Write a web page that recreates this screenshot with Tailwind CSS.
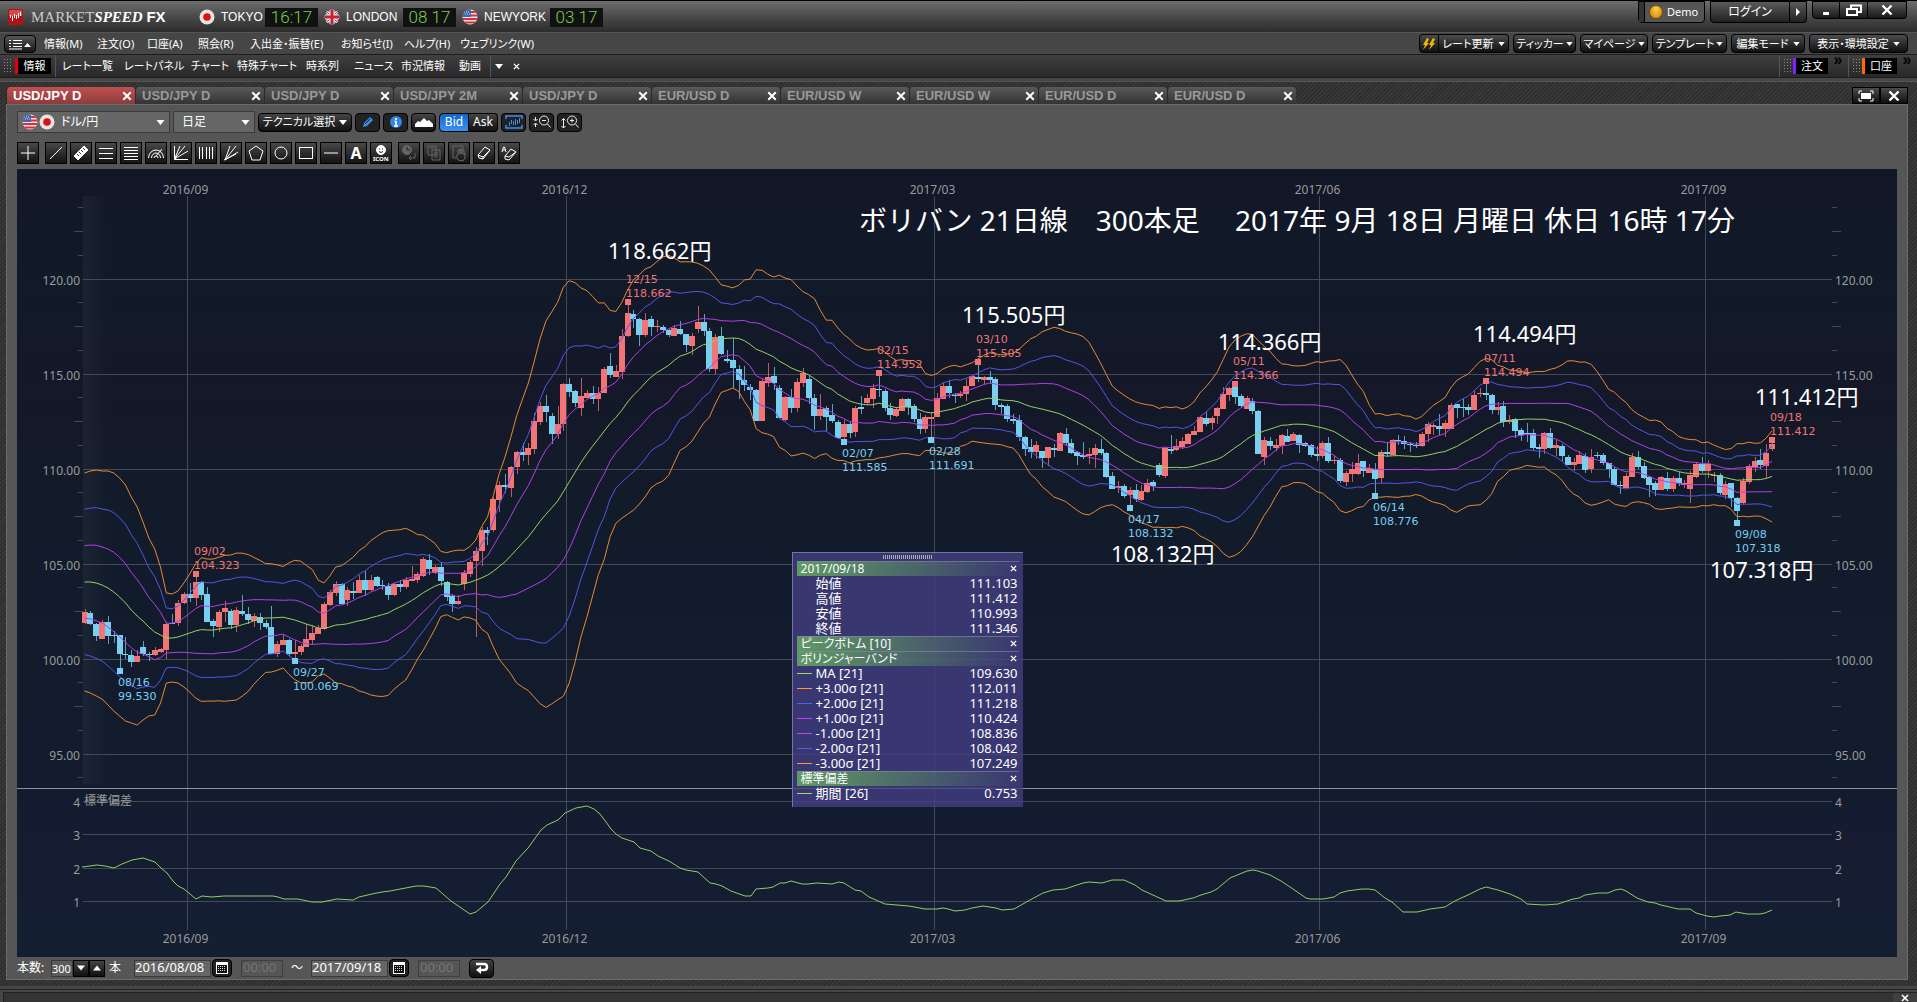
<!DOCTYPE html>
<html lang="ja">
<head>
  <meta charset="UTF-8">
  <meta name="viewport" content="width=device-width, initial-scale=1.0">
  <title>MARKETSPEED FX</title>
  <script src="https://cdn.jsdelivr.net/npm/@tailwindcss/browser@4"></script>
</head>
<body class="min-h-screen flex flex-col overflow-x-hidden bg-[#464646] font-['Noto_Sans','Noto_Sans_CJK_JP',sans-serif] text-xs leading-4 text-white">

  <!-- Shared icons -->
  <svg class="absolute size-0" aria-hidden="true">
    <defs>
      <clipPath id="round"><circle cx="8" cy="8" r="7.5"/></clipPath>
      <symbol id="jp" viewBox="0 0 16 16">
        <circle cx="8" cy="8" r="7.5" fill="#e4e4e4"/>
        <circle cx="8" cy="8" r="3.8" fill="#dd1111"/>
      </symbol>
      <symbol id="uk" viewBox="0 0 16 16">
        <g clip-path="url(#round)">
          <rect width="16" height="16" fill="#28408c"/>
          <path d="M0 0L16 16M16 0L0 16" stroke="#eee" stroke-width="3"/>
          <path d="M0 0L16 16M16 0L0 16" stroke="#c33" stroke-width="1"/>
          <path d="M8 0V16M0 8H16" stroke="#eee" stroke-width="5"/>
          <path d="M8 0V16M0 8H16" stroke="#c8202c" stroke-width="3"/>
        </g>
      </symbol>
      <symbol id="us" viewBox="0 0 16 16">
        <g clip-path="url(#round)">
          <rect width="16" height="16" fill="#f0e4e4"/>
          <path d="M0 3H16M0 6.500H16M0 10H16M0 13.500H16" stroke="#d8303a" stroke-width="1.800"/>
          <rect width="9" height="8" fill="#3868b0"/>
          <path d="M2 3h6M3 5h5" stroke="#cde" stroke-width="1" stroke-dasharray="1 1"/>
        </g>
      </symbol>
      <symbol id="down" viewBox="0 0 8 5"><path d="M0 0h8L4 5z" fill="#fff"/></symbol>
      <symbol id="cross" viewBox="0 0 8 8"><path d="M1 1L7 7M7 1L1 7" stroke="#fff" stroke-width="1.600"/></symbol>
      <symbol id="cal" viewBox="0 0 14 14">
        <rect x="1" y="1" width="12" height="12" fill="#fff"/>
        <rect x="2" y="4" width="10" height="8" fill="#111"/>
        <path d="M3 5.500h8M3 7.500h8M3 9.500h8" stroke="#ddd" stroke-width="1" stroke-dasharray="1 1"/>
      </symbol>
    </defs>
  </svg>

  <!-- Title bar -->
  <header class="flex h-8 items-start bg-linear-to-b from-[#6e6e6e] via-[#4a4a4a] to-[#2c2c2c] border-t border-black">
    <div class="flex h-8 items-center pl-2">
      <svg class="h-4 w-[15px]" viewBox="0 0 15 16">
        <rect width="15" height="16" rx="1" fill="#b01218"/>
        <rect x="1" y="1" width="13" height="6" fill="#d04a48"/>
        <path d="M2.500 6v3M4.500 7v5M6.500 5v4M8.500 6v4M10.500 4v5M12.500 3v4" stroke="#fff" stroke-width="1"/>
      </svg>
      <div class="ml-2 w-[144px] whitespace-nowrap text-[15px] text-[#ccc] font-['Liberation_Serif',serif]">MARKET<i class="font-bold text-white">SPEED</i> <b class="font-['Liberation_Sans',sans-serif] text-[15px] text-white">FX</b></div>
      <svg class="ml-6 size-4"><use href="#jp"/></svg>
      <span class="ml-1.5 w-[44px] text-[12px] font-['Liberation_Sans',sans-serif]">TOKYO</span>
      <span class="h-[19px] w-[53px] bg-[#111] text-center text-[17px] leading-[19px] font-light text-[#7ad04a] font-['Roboto',sans-serif]">16:17</span>
      <svg class="ml-1.5 size-4"><use href="#uk"/></svg>
      <span class="ml-1.5 w-[57px] text-[12px] font-['Liberation_Sans',sans-serif]">LONDON</span>
      <span class="h-[19px] w-[53px] bg-[#111] text-center text-[17px] leading-[19px] font-light text-[#7ad04a] font-['Roboto',sans-serif]">08 17</span>
      <svg class="ml-1.5 size-4"><use href="#us"/></svg>
      <span class="ml-1.5 w-[66px] text-[12px] font-['Liberation_Sans',sans-serif]">NEWYORK</span>
      <span class="h-[19px] w-[53px] bg-[#111] text-center text-[17px] leading-[19px] font-light text-[#7ad04a] font-['Roboto',sans-serif]">03 17</span>
    </div>
    <div class="ml-auto flex items-start pr-[10px]">
      <div class="flex h-[22px] w-[67px] items-center rounded-b-sm border border-black bg-[#555]">
        <span class="h-full w-1.5 border-r border-black bg-[#333]"></span>
        <span class="ml-1 size-3.5 rounded-full border border-[#7a4d00] bg-radial-[at_50%_25%] from-[#ffd24a] to-[#c97800]"></span>
        <span class="ml-1 text-[11px]">Demo</span>
      </div>
      <button class="ml-[5px] h-[22px] w-20 rounded-bl-sm border border-black bg-linear-to-b from-[#5a5a5a] to-[#222] [font-feature-settings:'palt']">ログイン</button>
      <button class="flex h-[22px] w-[17px] items-center justify-center rounded-br-sm border border-l-0 border-black bg-linear-to-b from-[#5a5a5a] to-[#222]" aria-label="その他"><svg class="h-2 w-1.5" viewBox="0 0 6 8"><path d="M1 0l4 4-4 4z" fill="#fff"/></svg></button>
      <button class="ml-[5px] flex h-[18px] w-[28px] items-center justify-center rounded-bl-sm border border-black bg-linear-to-b from-[#5a5a5a] to-[#1a1a1a]" aria-label="最小化"><svg class="size-3" viewBox="0 0 12 12"><path d="M3 9.500h6" stroke="#fff" stroke-width="3"/></svg></button>
      <button class="flex h-[18px] w-[28px] items-center justify-center border border-l-0 border-black bg-linear-to-b from-[#5a5a5a] to-[#1a1a1a]" aria-label="元に戻す"><svg class="h-3 w-4" viewBox="0 0 16 12"><path d="M5 5V1.500h10V8H11M1 5h10v6H1z" fill="none" stroke="#fff" stroke-width="2"/></svg></button>
      <button class="flex h-[18px] w-[39px] items-center justify-center rounded-br-sm border border-l-0 border-black bg-linear-to-b from-[#5a5a5a] to-[#1a1a1a]" aria-label="閉じる"><svg class="size-3"><use href="#cross"/></svg></button>
    </div>
  </header>

  <!-- Menu bar -->
  <nav class="flex h-[22px] items-center border-t border-[#555] pl-1 pr-[9px] text-[11px] [font-feature-settings:'palt'] whitespace-nowrap">
    <button class="mr-2 flex h-[18px] w-8 items-center justify-center gap-1 rounded-sm border border-black bg-linear-to-b from-[#555] to-[#181818]" aria-label="メニュー">
      <svg class="h-3 w-[22px]" viewBox="0 0 22 12"><path d="M0 2.500h2M4 2.500h9M0 5.500h2M4 5.500h9M0 8.500h2M4 8.500h9M0 11h13" stroke="#fff"/><path d="M15 9h7l-3.500-4z" fill="#fff"/></svg>
    </button>
    <button class="w-[53px] text-left">情報(M)</button>
    <button class="w-[50px] text-left">注文(O)</button>
    <button class="w-[51px] text-left">口座(A)</button>
    <button class="w-[52px] text-left">照会(R)</button>
    <button class="w-[91px] text-left">入出金・振替(E)</button>
    <button class="w-[63px] text-left">お知らせ(I)</button>
    <button class="w-[56px] text-left">ヘルプ(H)</button>
    <button class="w-[70px] text-left">ウェブリンク(W)</button>
    <div class="ml-auto flex gap-1">
      <div class="flex">
        <button class="flex h-[19px] w-5 items-center justify-center rounded-l-sm border border-black bg-linear-to-b from-[#4c4c4c] to-[#111]" aria-label="更新"><svg class="size-3.5" viewBox="0 0 14 14"><path d="M5 1L1 8h2L1 13l6-7H5l2-4zM11 1L7 8h2L7 13l6-7h-2l2-4z" fill="#f5b800"/></svg></button>
        <button class="flex h-[19px] w-[70px] items-center justify-center gap-1 rounded-r-sm border border-l-0 border-black bg-linear-to-b from-[#4c4c4c] to-[#111]">レート更新<svg class="h-1 w-[7px]"><use href="#down"/></svg></button>
      </div>
      <button class="flex h-[19px] w-[63px] items-center justify-center gap-0.5 rounded-sm border border-black bg-linear-to-b from-[#4c4c4c] to-[#111]">ティッカー<svg class="h-1 w-[7px]"><use href="#down"/></svg></button>
      <button class="flex h-[19px] w-[68px] items-center justify-center gap-0.5 rounded-sm border border-black bg-linear-to-b from-[#4c4c4c] to-[#111]">マイページ<svg class="h-1 w-[7px]"><use href="#down"/></svg></button>
      <button class="flex h-[19px] w-[75px] items-center justify-center gap-0.5 rounded-sm border border-black bg-linear-to-b from-[#4c4c4c] to-[#111]">テンプレート<svg class="h-1 w-[7px]"><use href="#down"/></svg></button>
      <button class="flex h-[19px] w-[74px] items-center justify-center gap-1 rounded-sm border border-black bg-linear-to-b from-[#4c4c4c] to-[#111]">編集モード<svg class="h-1 w-[7px]"><use href="#down"/></svg></button>
      <button class="flex h-[19px] w-[99px] items-center justify-center gap-1 rounded-sm border border-black bg-linear-to-b from-[#4c4c4c] to-[#111]">表示・環境設定<svg class="h-1 w-[7px]"><use href="#down"/></svg></button>
    </div>
  </nav>

  <!-- Function bar -->
  <nav class="flex h-6 items-center border-y border-[#1c1c1c] bg-linear-to-b from-[#404040] to-[#282828] pl-[3px] text-[11px] [font-feature-settings:'palt'] whitespace-nowrap">
    <span class="h-4 w-2 bg-[radial-gradient(#888_25%,transparent_30%)] bg-size-[3px_3px]"></span>
    <button class="ml-1 h-4 w-9 border-l-3 border-red-600 bg-black">情報</button>
    <span class="ml-1 mr-0.5 h-full border-l border-[#555]"></span>
    <button class="ml-1 w-[62px] text-left">レート一覧</button>
    <button class="w-[67px] text-left">レートパネル</button>
    <button class="w-[46px] text-left">チャート</button>
    <button class="w-[69px] text-left">特殊チャート</button>
    <button class="w-12 text-left">時系列</button>
    <button class="w-[47px] text-left">ニュース</button>
    <button class="w-[58px] text-left">市況情報</button>
    <button class="w-[31px] text-left">動画</button>
    <span class="h-full border-l border-[#555]"></span>
    <button class="ml-1" aria-label="一覧"><svg class="h-[5px] w-2"><use href="#down"/></svg></button>
    <button class="ml-2.5" aria-label="閉じる"><svg class="size-[7px]"><use href="#cross"/></svg></button>
    <div class="ml-auto flex h-full items-center">
      <span class="h-full w-1 border-l border-[#555]"></span>
      <span class="h-4 w-2 bg-[radial-gradient(#888_25%,transparent_30%)] bg-size-[3px_3px]"></span>
      <button class="ml-0.5 h-4 w-[35px] border-l-3 border-violet-600 bg-black">注文</button>
      <span class="mb-3 w-5 text-center text-base font-bold text-black font-['Liberation_Sans',sans-serif]">»</span>
      <span class="h-full w-1 border-l border-[#555]"></span>
      <span class="h-4 w-2 bg-[radial-gradient(#888_25%,transparent_30%)] bg-size-[3px_3px]"></span>
      <button class="ml-0.5 h-4 w-[35px] border-l-3 border-orange-500 bg-black">口座</button>
      <span class="mb-3 w-5 text-center text-base font-bold text-black font-['Liberation_Sans',sans-serif]">»</span>
    </div>
  </nav>

  <!-- Chart window -->
  <main class="mt-[3px] border-t border-[#555] bg-[repeating-linear-gradient(135deg,#2d2d2d_0px,#2d2d2d_1px,#3a3a3a_2px,#3a3a3a_3px)] pt-1 pb-[6px] pl-1.5 pr-[9px]">
    <div class="flex h-[18px] items-end justify-between">
      <div id="tabs" class="flex"></div>
      <div class="flex">
        <button class="flex h-[17px] w-7 items-center justify-center border border-black bg-linear-to-b from-[#4c4c4c] to-[#111]" aria-label="最大化"><svg class="h-3 w-4" viewBox="0 0 16 12"><rect x="3" y="3" width="10" height="6" fill="#fff"/><path d="M1 4V1h3M12 1h3v3M15 8v3h-3M4 11H1V8" fill="none" stroke="#fff"/></svg></button>
        <button class="flex h-[17px] w-7 items-center justify-center border border-black bg-linear-to-b from-[#4c4c4c] to-[#111]" aria-label="閉じる"><svg class="size-3"><use href="#cross"/></svg></button>
      </div>
    </div>

    <div class="border border-[#6c6c6c] bg-[#565656] px-2.5">
      <div class="flex items-center gap-[3px] pt-1.5 [font-feature-settings:'palt']">
        <label class="flex h-[22px] w-[153px] items-center border border-[#3a3a3a] bg-[#666] pl-1 pr-1">
          <svg class="size-4"><use href="#us"/></svg><svg class="ml-px size-4"><use href="#jp"/></svg>
          <select class="ml-1.5 flex-1 appearance-none outline-none" aria-label="通貨ペア"><option>ドル/円</option></select>
          <svg class="h-[5px] w-[9px]"><use href="#down"/></svg>
        </label>
        <label class="flex h-[22px] w-[82px] items-center border border-[#3a3a3a] bg-[#666] pl-2 pr-1">
          <select class="flex-1 appearance-none outline-none" aria-label="足種"><option>日足</option></select>
          <svg class="h-[5px] w-[9px]"><use href="#down"/></svg>
        </label>
        <button class="flex h-[19px] w-[94px] items-center justify-center gap-1 whitespace-nowrap rounded-sm border border-black bg-linear-to-b from-[#444] to-[#111] text-[11px]">テクニカル選択<svg class="h-[5px] w-2"><use href="#down"/></svg></button>
        <button class="flex h-[19px] w-[25px] items-center justify-center rounded-sm border border-black bg-[#222]" aria-label="描画"><svg class="size-3.5" viewBox="0 0 14 14"><path d="M2 12l1-4 6-6 3 3-6 6z" fill="#3b8ee8"/><path d="M4 9l5-5" stroke="#124" /></svg></button>
        <button class="flex h-[19px] w-[25px] items-center justify-center rounded-sm border border-black bg-[#222]" aria-label="情報"><svg class="size-3.5" viewBox="0 0 14 14"><circle cx="7" cy="7" r="6" fill="#2f86e6"/><path d="M7 3v2M5.500 6.500H7V11M5 11h4" stroke="#fff" stroke-width="1.600" fill="none"/></svg></button>
        <button class="flex h-[19px] w-[25px] items-center justify-center rounded-sm border border-black bg-linear-to-b from-[#444] to-[#111]" aria-label="エリア"><svg class="h-3 w-[18px]" viewBox="0 0 18 12"><path d="M0 11V8l3-3 2 1 4-4 3 3 2-1 4 4v3z" fill="#fff"/></svg></button>
        <div class="flex">
          <button class="h-[19px] w-[30px] rounded-l-sm border border-black bg-linear-to-b from-[#0f66c8] to-[#3a92f0]">Bid</button>
          <button class="h-[19px] w-[29px] rounded-r-sm border border-l-0 border-black bg-linear-to-b from-[#444] to-[#111]">Ask</button>
        </div>
        <button class="flex h-[19px] w-[25px] items-center justify-center rounded-sm border border-black bg-[#222]" aria-label="足幅"><svg class="h-3.5 w-[18px]" viewBox="0 0 18 14"><path d="M1 4V1h16v3M1 10v3h16v-3" fill="none" stroke="#3b8ee8" stroke-width="1.500"/><path d="M4.500 7v4M6.500 5v4M8.500 6v4M10.500 4v6M12.500 5v4M14.500 3v5" stroke="#3b8ee8"/></svg></button>
        <button class="flex h-[19px] w-[25px] items-center justify-center rounded-sm border border-black bg-[#222]" aria-label="縮小"><svg class="h-4 w-5" viewBox="0 0 20 16"><circle cx="12" cy="6.500" r="4.500" fill="none" stroke="#eee"/><path d="M10 6.500h4M15.500 10l3 3.500M3.500 3v3M3.500 10v3M1.500 5l2 2 2-2M1.500 11l2-2 2 2" stroke="#eee" fill="none"/></svg></button>
        <button class="flex h-[19px] w-[25px] items-center justify-center rounded-sm border border-black bg-[#222]" aria-label="拡大"><svg class="h-4 w-5" viewBox="0 0 20 16"><circle cx="12" cy="6.500" r="4.500" fill="none" stroke="#eee"/><path d="M10 6.500h4M12 4.500v4M15.500 10l3 3.500M3.500 5v9M1.500 6.500l2-2 2 2M1.500 12l2 2 2-2" stroke="#eee" fill="none"/></svg></button>
      </div>
      <div id="tools" class="flex gap-[3px] pt-[9px] pb-[5px]"></div>

      <div class="relative">
        <svg id="chart" class="block h-auto w-full" viewBox="17 169 1880 788"></svg>

        <!-- Data window -->
        <section class="absolute left-[41.200%] top-[48.600%] w-[231px] border-l border-t border-[#77749f] bg-[#443f82]/80 px-1 pb-1.5 text-xs leading-[15px]">
          <div class="mx-auto my-0.5 h-1 w-[50px] bg-[repeating-linear-gradient(90deg,#aaa_0px,#aaa_1px,transparent_1px,transparent_2px)]"></div>
          <div id="dataWindow"></div>
        </section>
      </div>

      <!-- Range bar -->
      <form class="flex h-[22px] items-center text-xs">
        <label for="bars" class="w-[34px]">本数:</label>
        <input id="bars" value="300" class="h-[17px] w-[22px] border border-[#3a3a3a] bg-[#5c5c5c] text-[11px]">
        <button type="button" class="flex h-[17px] w-4 items-center justify-center border border-black bg-linear-to-b from-[#444] to-[#111]" aria-label="減らす"><svg class="h-1.5 w-2"><use href="#down"/></svg></button>
        <button type="button" class="flex h-[17px] w-4 items-center justify-center border border-black bg-linear-to-b from-[#444] to-[#111]" aria-label="増やす"><svg class="h-1.5 w-2 rotate-180"><use href="#down"/></svg></button>
        <span class="ml-1 w-[25px]">本</span>
        <input aria-label="開始日" value="2016/08/08" class="h-[17px] w-[77px] border border-[#3a3a3a] bg-[#666] text-[13px]">
        <button type="button" class="ml-px flex h-[18px] w-5 items-center justify-center rounded-sm border border-black bg-[#222]" aria-label="開始日を選ぶ"><svg class="size-3.5"><use href="#cal"/></svg></button>
        <input aria-label="開始時刻" value="00:00" disabled class="ml-[9px] h-[17px] w-[42px] border border-[#404040] px-px text-[13px] text-[#757575]">
        <span class="w-7 text-center">～</span>
        <input aria-label="終了日" value="2017/09/18" class="h-[17px] w-[77px] border border-[#3a3a3a] bg-[#666] text-[13px]">
        <button type="button" class="ml-px flex h-[18px] w-5 items-center justify-center rounded-sm border border-black bg-[#222]" aria-label="終了日を選ぶ"><svg class="size-3.5"><use href="#cal"/></svg></button>
        <input aria-label="終了時刻" value="00:00" disabled class="ml-[9px] h-[17px] w-[42px] border border-[#404040] px-px text-[13px] text-[#757575]">
        <button type="button" class="ml-[9px] flex h-[19px] w-[25px] items-center justify-center rounded-sm border border-black bg-linear-to-b from-[#444] to-[#111]" aria-label="適用"><svg class="h-3.5 w-4" viewBox="0 0 16 14"><path d="M2 3h8q3 0 3 3t-3 3H6" fill="none" stroke="#fff" stroke-width="2.500"/><path d="M7 5v8L2 9z" fill="#fff"/></svg></button>
      </form>
    </div>
  </main>

  <!-- Status bar -->
  <footer class="mt-[3px] flex flex-1 flex-col border-t border-[#222] pt-0.5">
    <div class="ml-[3px] flex h-3 flex-1 justify-end overflow-hidden border-t border-l border-[#222] bg-[#343434]">
      <button class="flex w-6 items-end justify-center bg-[#3f3f3f]" aria-label="閉じる"><svg class="size-2"><use href="#cross"/></svg></button>
    </div>
  </footer>

  <script>
    // ---- tabs ----
    const tabNames = ['USD/JPY D', 'USD/JPY D', 'USD/JPY D', 'USD/JPY 2M', 'USD/JPY D', 'EUR/USD D', 'EUR/USD W', 'EUR/USD W', 'EUR/USD D', 'EUR/USD D'];
    document.getElementById('tabs').innerHTML = tabNames.map((name, i) => `
      <div class="flex h-[17px] w-[129px] items-center justify-between rounded-t-sm border-l border-[#2a2a2a] pl-1.5 pr-[3px] ${i === 0 ? 'bg-linear-to-b from-[#c05050] to-[#8c3c3c]' : 'bg-linear-to-b from-[#5a5a5a] to-[#333]'}">
        <button class="whitespace-nowrap text-[13px] font-bold font-['Liberation_Sans',sans-serif] ${i === 0 ? 'text-white' : 'text-[#999]'}">${name}</button>
        <button aria-label="タブを閉じる"><svg class="size-2.5"><use href="#cross"/></svg></button>
      </div>`).join('');

    // ---- drawing tools ----
    const tools = [
      ['カーソル', '<path d="M9 2v14M2 9h14"/>'],
      ['直線', '<path d="M3 15L15 3"/>'],
      ['定規', '<path d="M2 12L12 2l4 4L6 16z" fill="#fff"/><path d="M5 10l2 2M7 8l2 2M9 6l2 2M11 4l2 2" stroke="#333"/>'],
      ['平行線', '<path d="M2 4.500h14M2 9.500h14M2 14.500h14"/>'],
      ['リトレースメント', '<path d="M2 3.500h14M2 6.500h14M2 9.500h14M2 12.500h14M2 15.500h14"/>'],
      ['アーク', '<path d="M1.500 14a7.500 8 0 0 1 15 0M4.500 14a4.500 5 0 0 1 9 0M7 14a2 2 0 0 1 4 0M9 12l6-7"/>'],
      ['ファン', '<path d="M2.500 2v13.500H16M2.500 15L8 2M2.500 15L13 2M2.500 15L16 7"/>'],
      ['タイムゾーン', '<path d="M2.500 3v12M5.500 3v12M9.500 3v12M12.500 3v12M15.500 3v12"/>'],
      ['ギャンファン', '<path d="M3 16L8 2M3 16L14 2M3 16L16 8M2 16l12-6"/>'],
      ['五角形', '<path d="M9 2l7 5-3 9H5L2 7z"/>'],
      ['円', '<circle cx="9" cy="9" r="6"/>'],
      ['四角形', '<rect x="2.500" y="3.500" width="13" height="11"/>'],
      ['水平線', '<path d="M2 9h14"/>'],
      ['文字', ''],
      ['アイコン', '<circle cx="9" cy="6" r="4.500" fill="#fff"/><path d="M7 5h1M10 5h1M7 7.500q2 2 4 0" stroke="#222"/>'],
      ['履歴', '<circle cx="7" cy="6" r="4.500" fill="#666" stroke="#666"/><path d="M7 3v3h3" stroke="#222"/><path d="M15 9v5H9M11 12l-2 2 2 2" stroke="#666"/>'],
      ['コピー', '<path d="M3 2h8v9H3zM7 6h8v10H7zM9 9h4M9 11h4M9 13h4M5 4h4" stroke="#666"/>'],
      ['移動', '<path d="M3 2h10v3M3 2v12h3M8 16l-2-4 2-1V6h2v4-5h2v5-4h2v5l1-2v5l-2 3z" stroke="#666"/>'],
      ['消去', '<path d="M3 11l7-8 5 3-7 9-4-1zM3 11l5 2 7-7M8 13v2"/>'],
      ['全消去', '<path d="M5 12l6-7 5 3-7 8-4-1zM5 12l4 1 7-5M2 8l1.500-5h1L6 8M2.500 6h3"/>']
    ];
    document.getElementById('tools').innerHTML = tools.map(([label, art], i) => `
      <button aria-label="${label}" class="flex size-[22px] flex-col items-center justify-center overflow-hidden border border-black bg-linear-to-b from-[#484848] to-[#141414] font-bold ${i === 1 || i === 15 ? 'ml-[3px]' : ''}">
        ${label === '文字' ? '<span class="text-base leading-5">A</span>' : `<svg class="size-[18px]" viewBox="0 0 18 18" fill="none" stroke="#fff">${art}${label === 'アイコン' ? '<text x="1" y="17" font-size="6" fill="#fff" stroke="none">ICON</text>' : ''}</svg>`}
      </button>`).join('');

    // ---- data window ----
    const rows = [
      ['h', '2017/09/18'],
      ['', '始値', '111.103'], ['', '高値', '111.412'], ['', '安値', '110.993'], ['', '終値', '111.346'],
      ['h', 'ピークボトム [10]'],
      ['h', 'ボリンジャーバンド'],
      ['#99dd66', 'MA [21]', '109.630'],
      ['#ff9933', '+3.00σ [21]', '112.011'],
      ['#5a5af5', '+2.00σ [21]', '111.218'],
      ['#c040ff', '+1.00σ [21]', '110.424'],
      ['#c040ff', '-1.00σ [21]', '108.836'],
      ['#5a5af5', '-2.00σ [21]', '108.042'],
      ['#ff9933', '-3.00σ [21]', '107.249'],
      ['h', '標準偏差'],
      ['#99dd66', '期間 [26]', '0.753']
    ];
    document.getElementById('dataWindow').innerHTML = rows.map(([kind, name, value]) => kind === 'h'
      ? `<div class="flex h-[15px] items-center justify-between border-t border-[#8a88a8]/60 bg-linear-to-r from-[#5f9a64] to-transparent pl-1 pr-0.5 [font-feature-settings:'palt']"><span>${name}</span><button aria-label="閉じる"><svg class="size-[7px]"><use href="#cross"/></svg></button></div>`
      : `<div class="flex h-[15px] items-center text-[13px]"><span class="h-px w-[15px]" style="background:${kind || 'transparent'}"></span><span class="ml-1">${name}</span><span class="ml-auto pr-px">${value}</span></div>`
    ).join('');

    // ---- price data: open, close, high, low per day, in chart units ----
    const candles = `
      623 612 609 624;613 624 611 625;624 636 623 641;639 622 620 639;622 636 616 644;
      635 636 631 643;635 654 635 670;654 655 637 659;655 662 650 667;662 656 650 662;
      647 654 641 656;654 655 652 661;655 650 647 656;652 649 648 653;650 624 622 659;
      623 624 614 624;623 603 600 626;603 594 592 604;594 598 583 602;598 582 577 606;
      582 595 581 600;594 622 587 622;621 626 619 637;627 612 610 632;612 608 601 622;
      611 625 609 629;625 610 607 632;611 614 595 616;614 620 607 624;621 616 613 627;
      617 623 613 630;623 627 620 629;627 654 606 654;654 644 641 657;645 640 635 645;
      640 654 639 656;654 652 640 659;652 646 644 655;647 639 624 647;640 633 625 644;
      634 628 625 634;629 604 602 630;605 592 590 606;593 584 581 596;584 604 583 605;
      600 590 587 606;591 593 582 599;593 580 575 593;580 590 571 596;590 580 575 591;
      577 586 576 587;585 586 580 590;586 595 583 600;595 584 583 596;584 587 580 592;
      587 580 577 589;581 579 566 581;580 574 572 583;576 559 557 577;560 569 554 575;
      573 567 565 574;567 581 562 586;582 597 581 601;596 604 594 612;604 601 595 605;
      584 573 570 590;574 562 560 577;561 551 547 637;551 530 527 566;530 533 527 545;
      530 499 497 532;500 485 481 512;485 487 474 493;488 467 466 497;467 452 451 474;
      452 455 443 461;455 448 443 465;449 421 413 454;422 406 402 425;406 412 395 422;
      416 434 413 444;434 424 406 439;424 384 383 431;384 392 378 397;391 403 390 407;
      408 396 378 416;398 393 390 398;393 399 386 404;399 393 387 411;393 369 367 393;
      366 375 353 378;377 371 365 377;372 336 329 379;336 313 303 337;314 319 310 328;
      319 335 318 346;335 320 313 337;319 327 316 336;327 326 320 332;327 330 325 333;
      330 335 329 337;336 328 325 336;329 334 321 335;334 345 334 352;346 336 333 355;
      329 322 306 333;322 331 314 336;331 369 328 372;369 337 334 374;336 354 327 355;
      359 361 350 363;360 368 338 388;369 380 365 399;380 385 366 391;387 390 384 400;
      390 421 389 421;421 381 378 421;383 377 363 387;376 383 367 390;388 418 385 419;
      420 397 396 421;397 408 389 413;408 382 378 412;383 373 368 387;379 398 375 404;
      398 416 394 430;416 409 394 420;408 417 406 431;415 421 404 423;422 438 420 439;
      437 424 420 443;424 433 421 438;432 408 406 437;407 409 396 414;403 398 394 404;
      399 388 384 408;389 390 374 397;391 408 389 411;408 415 403 420;416 409 407 417;
      411 399 398 411;399 407 398 415;406 419 404 422;419 429 413 434;429 417 415 433;
      419 417 412 438;417 398 393 417;399 386 382 399;386 393 380 398;395 396 393 403;
      396 394 391 398;394 386 379 401;386 376 375 386;377 379 364 382;380 377 376 384;
      377 380 371 384;379 405 377 410;405 407 403 414;406 419 404 422;419 421 414 424;
      420 437 415 441;437 449 436 456;447 452 439 458;452 445 441 459;451 458 451 468;
      458 447 447 466;448 450 444 457;451 433 432 451;434 443 428 446;443 453 439 454;
      452 456 451 465;455 457 442 459;456 454 448 464;455 448 444 468;449 453 439 455;
      453 477 452 478;476 489 472 489;488 486 481 493;486 496 484 498;495 490 487 508;
      490 499 484 502;500 491 485 501;492 483 479 493;482 486 480 491;465 475 463 477;
      476 448 447 478;449 451 435 454;450 446 439 451;447 441 437 449;444 434 433 444;
      435 431 426 435;432 417 417 432;418 424 411 426;423 418 416 430;416 408 407 424;
      409 394 387 409;395 388 387 401;387 397 384 404;396 406 394 408;409 398 396 409;
      401 411 398 414;411 454 410 454;457 440 437 465;441 446 437 450;448 445 439 451;
      446 435 434 454;436 442 429 442;441 434 432 441;435 445 434 453;443 446 442 447;
      445 455 444 457;454 456 446 461;456 443 441 458;443 461 437 463;461 460 455 464;
      460 481 458 483;482 473 471 486;474 469 462 482;474 463 454 475;461 471 461 477;
      473 468 464 473;469 479 463 493;478 452 450 483;452 454 442 457;455 440 439 455;
      440 441 435 445;441 444 436 449;444 445 442 452;445 446 442 448;446 434 432 447;
      434 424 422 442;427 425 423 435;426 429 414 435;429 423 420 437;429 405 403 429;
      404 408 404 418;407 408 399 417;407 410 404 415;410 395 390 410;394 393 388 397;
      393 395 382 400;395 410 394 414;410 407 402 415;406 422 401 427;422 420 415 424;
      419 431 418 438;430 435 428 441;433 434 423 442;433 448 429 450;447 449 444 458;
      449 433 432 454;433 448 428 449;448 445 440 456;446 456 444 461;457 465 455 465;
      465 462 458 471;464 455 451 464;456 470 453 473;469 457 449 473;455 456 452 458;
      455 463 453 465;463 469 463 478;469 485 467 485;485 486 481 494;488 476 473 488;
      477 457 453 477;457 467 451 469;466 478 462 479;477 485 476 497;483 490 481 496;
      490 477 476 490;478 489 472 491;489 478 476 492;478 483 472 486;485 483 480 488;
      489 475 471 503;477 464 462 478;464 471 457 473;471 464 460 478;476 475 472 482;
      475 493 473 495;495 484 481 499;483 498 483 507;498 511 497 522;503 481 478 505;
      482 466 464 484;467 461 457 472;460 465 449 469;466 453 444 478;449 444 438 451`
      .split(';').map(row => row.trim().split(' ').map(Number));

    // Bands for the first bars, whose history lies before the visible range
    const startMa = [582, 582, 583, 585, 588, 592, 597, 603, 610, 616, 621, 627, 632, 635, 638, 638, 637, 635, 633, 631];
    const startTop = [473, 471, 470, 471, 471, 473, 478, 485, 497, 507, 522, 538, 549, 567, 593, 594, 591, 583, 574, 564];

    const startX = 84.6, step = 5.839;
    const xOf = i => startX + step * i;

    const bands = candles.map((c, i) => {
      if (i < 20) return { ma: startMa[i], sd: (startMa[i] - startTop[i]) / 3 };
      const closes = candles.slice(i - 20, i + 1).map(k => k[1]);
      const ma = closes.reduce((a, b) => a + b) / 21;
      const sd = Math.sqrt(closes.reduce((a, b) => a + (b - ma) ** 2, 0) / 21);
      return { ma, sd };
    });

    const deviation = '82,867 90,866 97,865 105,866 114,868 122,864 132,860 143,858 149,860 155,862 161,868 167,873 173,881 178,886 184,889 196,899 202,896 212,897 224,896 273,896 278,897 284,899 298,899 312,902 322,902 337,899 353,900 359,897 372,894 382,892 390,891 416,886 424,886 436,888 451,901 470,914 476,912 482,907 488,902 500,884 506,877 516,861 528,848 541,830 547,825 558,820 565,813 576,808 587,806 594,809 600,814 606,822 611,829 616,834 622,838 634,842 640,848 651,851 658,856 669,861 680,868 686,870 698,872 710,883 716,884 722,886 731,891 745,896 751,896 756,889 768,888 773,887 780,883 785,883 791,881 802,884 808,884 817,883 832,884 839,882 844,883 855,890 861,891 869,897 885,904 909,906 925,909 937,909 943,908 948,909 955,911 965,910 972,908 983,906 996,908 1002,910 1014,909 1030,900 1043,893 1053,890 1065,889 1083,883 1089,882 1102,883 1112,880 1124,880 1135,885 1142,890 1166,901 1179,901 1193,898 1201,895 1211,892 1217,889 1230,878 1247,871 1253,870 1258,871 1270,875 1281,881 1293,889 1306,898 1310,899 1323,899 1334,897 1340,893 1347,891 1362,889 1369,889 1375,890 1385,898 1392,902 1403,912 1417,912 1430,909 1445,907 1453,902 1461,898 1468,895 1480,889 1486,887 1498,890 1510,894 1521,899 1527,904 1544,905 1558,904 1573,899 1579,898 1585,895 1598,893 1608,893 1615,890 1621,889 1626,891 1637,898 1648,902 1655,903 1661,905 1678,909 1690,909 1696,913 1707,916 1714,917 1720,916 1730,915 1736,912 1747,914 1760,914 1765,913 1772,910';

    const out = [];
    const line = (x1, y1, x2, y2, color) => out.push(`<path d="M${x1} ${y1}L${x2} ${y2}" stroke="${color}" shape-rendering="crispEdges"/>`);
    const text = (x, y, size, color, str, extra = '') => out.push(`<text x="${x}" y="${y}" font-size="${size}" fill="${color}" ${extra}>${str}</text>`);
    const grid = '#434956', axis = '#9a9a9a';

    out.push(`
      <defs>
        <linearGradient id="bg" x2="0" y2="1">
          <stop offset="0" stop-color="#121728"/><stop offset=".15" stop-color="#111a28"/>
          <stop offset=".28" stop-color="#141829"/><stop offset=".42" stop-color="#121b2a"/>
          <stop offset=".78" stop-color="#121c2e"/><stop offset=".84" stop-color="#151c32"/>
          <stop offset=".92" stop-color="#151d32"/><stop offset="1" stop-color="#131f31"/>
        </linearGradient>
        <linearGradient id="edge"><stop stop-color="#fff" stop-opacity=".04"/><stop offset="1" stop-color="#fff" stop-opacity="0"/></linearGradient>
      </defs>
      <rect x="17" y="169" width="1880" height="788" fill="url(#bg)"/>
      <rect x="83" y="196" width="26" height="588" fill="url(#edge)"/>`);

    // price axis
    for (let k = -3; k <= 21; k++) {
      const y = Math.floor(279 + k * 23.75) + 0.5;
      if (k >= 0 && k % 4 === 0) {
        const label = (120 - k * 1.25).toFixed(2);
        line(83, y, 1832, y, grid);
        text(80, y + 5, 12, axis, label, 'text-anchor="end"');
        text(1835, y + 5, 12, axis, label);
      } else {
        const len = k % 2 ? 5 : 9;
        line(83 - len, y, 83, y, grid);
        line(1832, y, 1832 + len, y, grid);
      }
    }
    // deviation axis
    [[4, 801.5], [3, 834.5], [2, 868.5], [1, 901.5]].forEach(([n, y]) => {
      line(83, y, 1832, y, grid);
      text(80, y + 5, 12, axis, n, 'text-anchor="end"');
      text(1835, y + 5, 12, axis, n);
    });
    // months
    [[187.5, '2016/09'], [566.5, '2016/12'], [934.5, '2017/03'], [1319.5, '2017/06'], [1705.5, '2017/09']].forEach(([x, label]) => {
      line(x, 196, x, 930, grid);
      text(x - 2, 194, 12, axis, label, 'text-anchor="middle"');
      text(x - 2, 943, 12, axis, label, 'text-anchor="middle"');
    });
    line(17, 788.5, 1897, 788.5, '#8f949c');
    text(84, 805, 12, axis, '標準偏差');

    // candles
    candles.forEach(([o, c, h, l], i) => {
      const up = c < o, x = Math.round(xOf(i));
      const color = up ? '#f27474' : '#78cff0';
      out.push(`<rect x="${x}" y="${h}" width="1" height="${l - h}" fill="${color}" opacity=".75"/>`);
      out.push(`<rect x="${x - 3}" y="${Math.min(o, c)}" width="6" height="${Math.max(Math.abs(o - c), 1)}" fill="${color}"/>`);
    });

    // bands
    const plot = (k, color) => out.push(`<polyline points="${bands.map((b, i) => `${xOf(i).toFixed(1)},${(b.ma - k * b.sd).toFixed(1)}`).join(' ')}" fill="none" stroke="${color}"/>`);
    [[0, '#92d463'], [1, '#b040e8'], [-1, '#b040e8'], [2, '#5654e6'], [-2, '#5654e6'], [3, '#e88a34'], [-3, '#e88a34']].forEach(([k, color]) => plot(k, color));
    out.push(`<polyline points="${deviation}" fill="none" stroke="#8fd060"/>`);

    // peaks and bottoms: bar, marker y, date, price, 1 for a peak
    [
      [6, 671, '08/16', '99.530', 0], [19, 574, '09/02', '104.323', 1], [36, 661, '09/27', '100.069', 0],
      [93, 302, '12/15', '118.662', 1], [130, 442, '02/07', '111.585', 0], [136, 373, '02/15', '114.952', 1],
      [145, 440, '02/28', '111.691', 0], [153, 362, '03/10', '115.505', 1], [179, 508, '04/17', '108.132', 0],
      [197, 384, '05/11', '114.366', 1], [221, 496, '06/14', '108.776', 0], [240, 381, '07/11', '114.494', 1],
      [283, 523, '09/08', '107.318', 0], [289, 440, '09/18', '111.412', 1]
    ].forEach(([i, y, date, price, peak]) => {
      const x = Math.round(xOf(i)), color = peak ? '#f27474' : '#78cff0';
      const top = peak ? y - 19 : y + 15;
      out.push(`<rect x="${x - 3}" y="${y - 3}" width="6" height="6" fill="${color}"/>`);
      text(x - 2, top, 11, color, date, 'font-family="DejaVu Sans, sans-serif"');
      text(x - 2, top + 14, 11, color, price, 'font-family="DejaVu Sans, sans-serif"');
    });

    // notes
    text(859, 231, 28, '#fff', 'ボリバン 21日線　300本足　 2017年 9月 18日 月曜日 休日 16時 17分', 'xml:space="preserve"');
    [
      [608, 259, '118.662円'], [962, 323, '115.505円'], [1218, 350, '114.366円'], [1111, 562, '108.132円'],
      [1473, 342, '114.494円'], [1755, 405, '111.412円'], [1710, 578, '107.318円']
    ].forEach(([x, y, str]) => text(x, y, 22, '#fff', str));

    document.getElementById('chart').innerHTML = out.join('');
  </script>
</body>
</html>
